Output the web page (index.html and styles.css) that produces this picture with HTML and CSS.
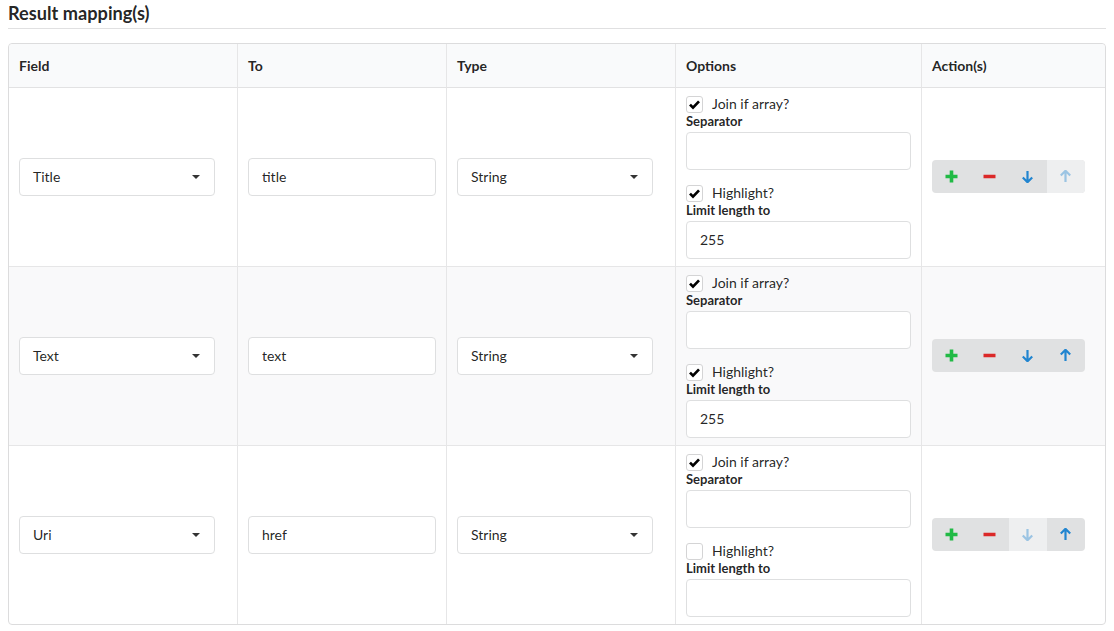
FILE: index.html
```html
<!DOCTYPE html>
<html>
<head>
<meta charset="utf-8">
<link rel="stylesheet" href="styles.css">
</head>
<body>
<h4 class="title">Result mapping(s)</h4>
<table class="grid">
  <colgroup>
    <col class="c-field"><col class="c-to"><col class="c-type"><col class="c-opt"><col class="c-act">
  </colgroup>
  <thead>
    <tr><th>Field</th><th>To</th><th>Type</th><th>Options</th><th>Action(s)</th></tr>
  </thead>
  <tbody>
    <tr>
      <td><div class="select">Title<span class="caret"></span></div></td>
      <td><div class="input">title</div></td>
      <td><div class="select">String<span class="caret"></span></div></td>
      <td class="opts">
        <div class="check"><span class="box"><svg viewBox="0 0 15 15" class="tick"><path d="M3 7.6l3 3 6-6.2"/></svg></span>Join if array?</div>
        <div class="lbl">Separator</div>
        <div class="input wide"></div>
        <div class="check second"><span class="box"><svg viewBox="0 0 15 15" class="tick"><path d="M3 7.6l3 3 6-6.2"/></svg></span>Highlight?</div>
        <div class="lbl">Limit length to</div>
        <div class="input wide">255</div>
      </td>
      <td>
        <div class="btns">
          <span class="btn"><svg viewBox="0 0 13 13" class="ic plus"><path d="M6.5 0.5v12M0.5 6.5h12"/></svg></span>
          <span class="btn"><svg viewBox="0 0 13 13" class="ic minus"><path d="M0.5 6.5h12"/></svg></span>
          <span class="btn"><svg viewBox="0 0 13 13" class="ic arrow"><path d="M6.5 1v11M1.8 7.5l4.7 4.7 4.7-4.7"/></svg></span>
          <span class="btn off"><svg viewBox="0 0 13 13" class="ic arrow"><path d="M6.5 12V1M1.8 5.5l4.7-4.7 4.7 4.7"/></svg></span>
        </div>
      </td>
    </tr>
    <tr class="alt">
      <td><div class="select">Text<span class="caret"></span></div></td>
      <td><div class="input">text</div></td>
      <td><div class="select">String<span class="caret"></span></div></td>
      <td class="opts">
        <div class="check"><span class="box"><svg viewBox="0 0 15 15" class="tick"><path d="M3 7.6l3 3 6-6.2"/></svg></span>Join if array?</div>
        <div class="lbl">Separator</div>
        <div class="input wide"></div>
        <div class="check second"><span class="box"><svg viewBox="0 0 15 15" class="tick"><path d="M3 7.6l3 3 6-6.2"/></svg></span>Highlight?</div>
        <div class="lbl">Limit length to</div>
        <div class="input wide">255</div>
      </td>
      <td>
        <div class="btns">
          <span class="btn"><svg viewBox="0 0 13 13" class="ic plus"><path d="M6.5 0.5v12M0.5 6.5h12"/></svg></span>
          <span class="btn"><svg viewBox="0 0 13 13" class="ic minus"><path d="M0.5 6.5h12"/></svg></span>
          <span class="btn"><svg viewBox="0 0 13 13" class="ic arrow"><path d="M6.5 1v11M1.8 7.5l4.7 4.7 4.7-4.7"/></svg></span>
          <span class="btn"><svg viewBox="0 0 13 13" class="ic arrow"><path d="M6.5 12V1M1.8 5.5l4.7-4.7 4.7 4.7"/></svg></span>
        </div>
      </td>
    </tr>
    <tr>
      <td><div class="select">Uri<span class="caret"></span></div></td>
      <td><div class="input">href</div></td>
      <td><div class="select">String<span class="caret"></span></div></td>
      <td class="opts">
        <div class="check"><span class="box"><svg viewBox="0 0 15 15" class="tick"><path d="M3 7.6l3 3 6-6.2"/></svg></span>Join if array?</div>
        <div class="lbl">Separator</div>
        <div class="input wide"></div>
        <div class="check second"><span class="box"></span>Highlight?</div>
        <div class="lbl">Limit length to</div>
        <div class="input wide"></div>
      </td>
      <td>
        <div class="btns">
          <span class="btn"><svg viewBox="0 0 13 13" class="ic plus"><path d="M6.5 0.5v12M0.5 6.5h12"/></svg></span>
          <span class="btn"><svg viewBox="0 0 13 13" class="ic minus"><path d="M0.5 6.5h12"/></svg></span>
          <span class="btn off"><svg viewBox="0 0 13 13" class="ic arrow"><path d="M6.5 1v11M1.8 7.5l4.7 4.7 4.7-4.7"/></svg></span>
          <span class="btn"><svg viewBox="0 0 13 13" class="ic arrow"><path d="M6.5 12V1M1.8 5.5l4.7-4.7 4.7 4.7"/></svg></span>
        </div>
      </td>
    </tr>
  </tbody>
</table>
</body>
</html>
```
FILE: styles.css
```css
* { box-sizing: border-box; }
body {
  margin: 0 8px;
  font-family: Lato, "Open Sans", sans-serif;
  font-size: 14px;
  color: rgba(0,0,0,.87);
  background: #fff;
}
.title {
  margin: 2px 0 0;
  font-size: 18.2px;
  line-height: 22px;
  font-weight: 700;
  padding-bottom: 4px;
  border-bottom: 1px solid #e0e0e1;
}
.grid {
  margin-top: 14px;
  width: 1098px;
  table-layout: fixed;
  border-collapse: separate;
  border-spacing: 0;
  border: 1px solid #dcdcdd;
  border-radius: 4px;
}
.c-field { width: 228px; }
.c-to { width: 209px; }
.c-type { width: 229px; }
.c-opt { width: 246px; }
.c-act { width: 184px; }
th {
  background: #f9fafb;
  text-align: left;
  font-weight: 700;
  padding: 13px 10px 12px;
  line-height: 18px;
  border-bottom: 1px solid #e2e2e3;
  border-left: 1px solid #e6e6e7;
}
th:first-child, td:first-child { border-left: none; }
th:first-child { border-top-left-radius: 4px; }
th:last-child { border-top-right-radius: 4px; }
td {
  padding: 6px 10px 7px;
  vertical-align: middle;
  border-left: 1px solid #e6e6e7;
  border-top: 1px solid #e6e6e7;
}
tbody tr:first-child td { border-top: none; }
tr.alt td { background: #f9f9fa; }
.select, .input {
  height: 38px;
  border: 1px solid #dedfe0;
  border-radius: 4px;
  background: #fff;
  display: flex;
  align-items: center;
  padding: 0 13px;
  line-height: 18px;
}
.select { width: 196px; justify-content: space-between; padding-right: 14px; }
.caret {
  width: 0; height: 0;
  border-left: 4px solid transparent;
  border-right: 4px solid transparent;
  border-top: 4px solid rgba(0,0,0,.8);
  margin-top: 1px;
}
.check {
  display: flex;
  align-items: center;
  height: 20px;
  line-height: 18px;
}
.check.second { margin-top: 13px; }
.box {
  width: 17px; height: 17px;
  border: 1px solid #d4d4d5;
  border-radius: 3px;
  background: #fff;
  margin-right: 9px;
  flex: none;
  display: flex;
}
.tick {
  width: 15px; height: 15px;
  fill: none;
  stroke: #000;
  stroke-width: 2.7;
  stroke-linecap: butt;
  stroke-linejoin: miter;
}
.lbl {
  font-size: 13px;
  font-weight: 700;
  line-height: 14px;
  margin-bottom: 4px;
}
.btns {
  display: flex;
  width: 153px;
  height: 33px;
  border-radius: 4px;
  overflow: hidden;
  background: #e0e1e2;
}
.btn {
  flex: 1;
  display: flex;
  align-items: center;
  justify-content: center;
}
.btn.off { background: #eeeff0; }
.btn.off .ic { opacity: .4; }
.ic { width: 13px; height: 13px; fill: none; stroke-linecap: butt; }
.plus { stroke: #21ba45; stroke-width: 3.6; }
.minus { stroke: #db2828; stroke-width: 3.4; }
.arrow { stroke: #2185d0; stroke-width: 2.2; stroke-linejoin: miter; }
```
